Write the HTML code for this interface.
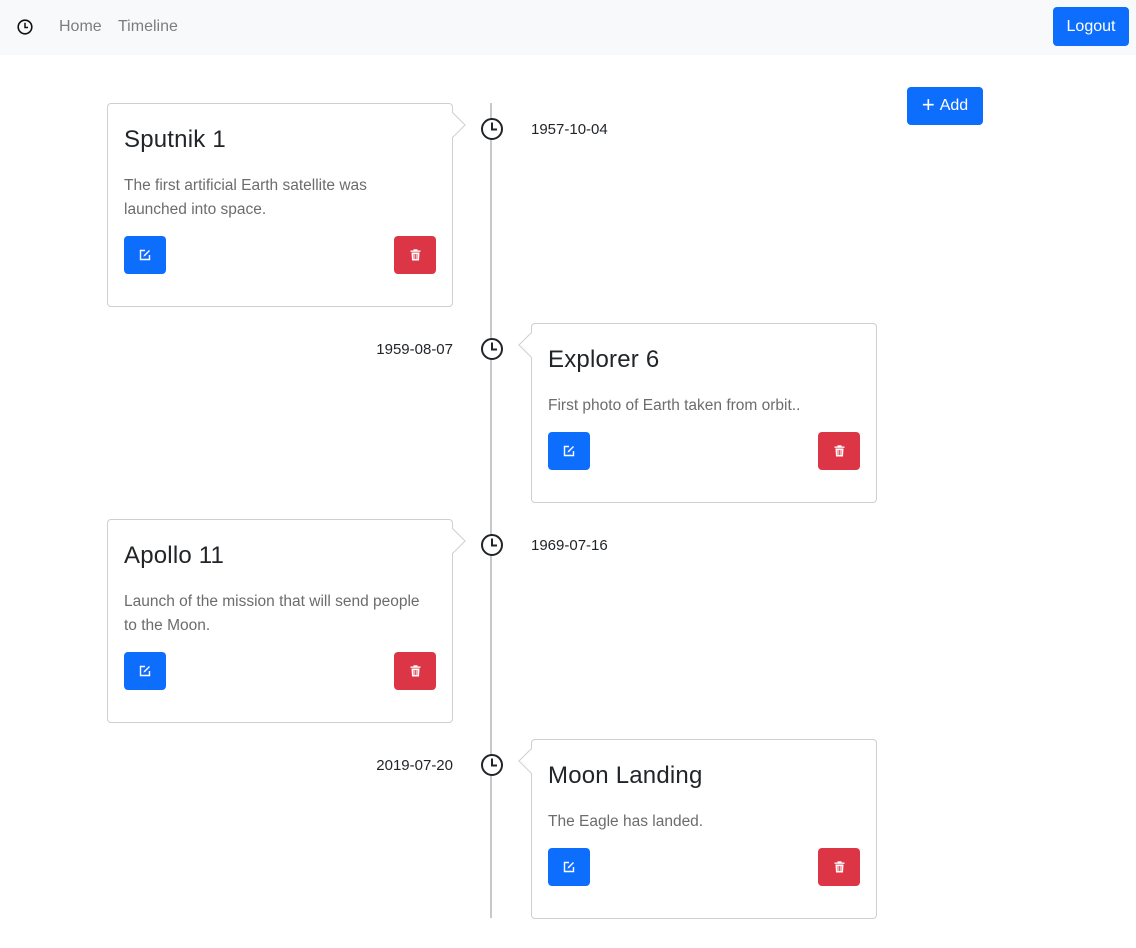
<!DOCTYPE html>
<html><head><meta charset="utf-8"><style>
*{box-sizing:border-box}
body{margin:0;width:1136px;height:948px;background:#fff;font-family:"Liberation Sans",sans-serif;position:relative;overflow:hidden;color:#212529}
.nav{position:absolute;left:0;top:0;width:1136px;height:55px;background:#f8f9fa}
.nav a{position:absolute;top:18px;font-size:16px;color:#7a7e83;text-decoration:none}
.btnp{position:absolute;background:#0d6efd;color:#fff;border-radius:4px;font-size:16px;display:flex;align-items:center;justify-content:center}
.line{position:absolute;left:490px;top:103px;width:2px;height:815px;background:#c8c8c8}
.card{position:absolute;width:346px;border:1px solid #cfcfcf;border-radius:4px;background:#fff}
.card h3{position:absolute;left:16px;top:22px;margin:0;font-size:24px;font-weight:500;color:#212529;letter-spacing:0.2px}
.card p{position:absolute;left:16px;margin:0;font-size:15.5px;line-height:24px;color:#6c6c6c;width:290px}
.arr{position:absolute;top:12px;width:18px;height:18px;background:#fff;border:1px solid #cfcfcf;transform:rotate(45deg)}
.card.l .arr{right:-10px;border-left:none;border-bottom:none}
.card.r .arr{left:-10px;border-right:none;border-top:none}
.b{position:absolute;width:42px;height:38px;border-radius:4px;display:flex;align-items:center;justify-content:center}
.be{left:16px;background:#0d6efd}.bd{right:16px;background:#dc3545}
.clk{position:absolute;left:480px}
.date{position:absolute;font-size:15px;color:#212529}
.dl{left:300px;width:153px;text-align:right}
</style></head><body>
<div class="nav">
<svg style="position:absolute;left:17px;top:19px" width="16" height="16" viewBox="0 0 16 16"><circle cx="8" cy="8" r="6.8" fill="none" stroke="#111" stroke-width="1.6"/><path d="M8 3.8V8.5H11" fill="none" stroke="#111" stroke-width="1.5"/></svg>
<a style="left:59px">Home</a><a style="left:118px">Timeline</a>
<div class="btnp" style="left:1053px;top:7px;width:76px;height:39px">Logout</div>
</div>
<div class="btnp" style="left:907px;top:87px;width:76px;height:38px"><span style="font-size:22px;margin-right:5px;margin-top:-3px">+</span>Add</div>
<div class="line"></div>

<div class="card l" style="left:107px;top:103px;height:204px"><div class="arr"></div><h3>Sputnik 1</h3><p style="top:70px">The first artificial Earth satellite was launched into space.</p><div class="b be" style="top:132px">E</div><div class="b bd" style="top:132px">D</div></div>
<div class="card r" style="left:531px;top:323px;height:180px"><div class="arr"></div><h3>Explorer 6</h3><p style="top:70px">First photo of Earth taken from orbit..</p><div class="b be" style="top:108px">E</div><div class="b bd" style="top:108px">D</div></div>
<div class="card l" style="left:107px;top:519px;height:204px"><div class="arr"></div><h3>Apollo 11</h3><p style="top:70px;width:302px">Launch of the mission that will send people to the Moon.</p><div class="b be" style="top:132px">E</div><div class="b bd" style="top:132px">D</div></div>
<div class="card r" style="left:531px;top:739px;height:180px"><div class="arr"></div><h3>Moon Landing</h3><p style="top:70px">The Eagle has landed.</p><div class="b be" style="top:108px">E</div><div class="b bd" style="top:108px">D</div></div>

<div class="date" style="left:531px;top:121px">1957-10-04</div>
<div class="date dl" style="top:341px">1959-08-07</div>
<div class="date" style="left:531px;top:537px">1969-07-16</div>
<div class="date dl" style="top:757px">2019-07-20</div>

<svg width="0" height="0" style="position:absolute"><defs>
<symbol id="c" viewBox="0 0 24 24"><circle cx="12" cy="12" r="10" fill="#fff" stroke="#212529" stroke-width="2"/><path d="M12 5.5V12.5H17" fill="none" stroke="#212529" stroke-width="2"/></symbol>
</defs></svg>
<svg class="clk" style="top:117px" width="24" height="24"><use href="#c"/></svg>
<svg class="clk" style="top:337px" width="24" height="24"><use href="#c"/></svg>
<svg class="clk" style="top:533px" width="24" height="24"><use href="#c"/></svg>
<svg class="clk" style="top:753px" width="24" height="24"><use href="#c"/></svg>
<script>
document.querySelectorAll('.be').forEach(e=>e.innerHTML='<svg width="12" height="12" viewBox="0 0 12 12"><path d="M6 1.5H1.5V10.5H10.5V6" fill="none" stroke="#fff" stroke-width="1.4"/><path d="M10 1L5 6L4.5 7.5L6 7L11 2Z" fill="#fff"/></svg>');
document.querySelectorAll('.bd').forEach(e=>e.innerHTML='<svg width="11" height="12" viewBox="0 0 11 12"><rect x="0.5" y="1.5" width="10" height="1.3" fill="#fff"/><rect x="3.5" y="0.3" width="4" height="1.5" fill="#fff"/><path d="M1.5 3.5H9.5L9 11.5H2Z" fill="#fff"/><path d="M4 5V10M5.5 5V10M7 5V10" stroke="#dc3545" stroke-width="0.8"/></svg>');
</script>
</body></html>
